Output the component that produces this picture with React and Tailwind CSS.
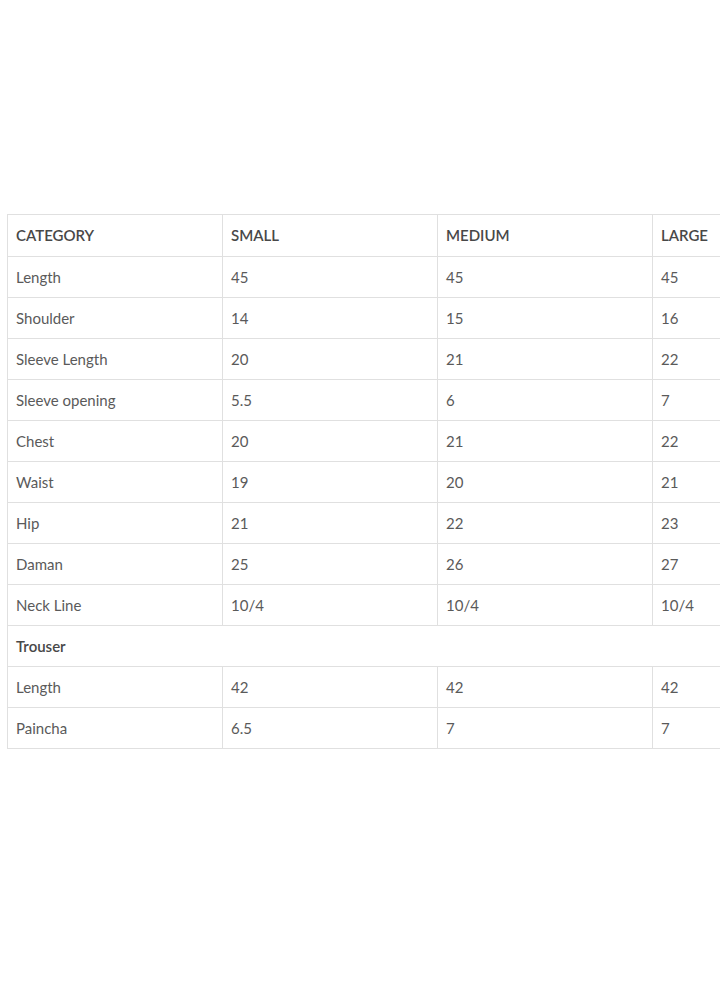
const rows = [
  ["Length", "45", "45", "45"],
  ["Shoulder", "14", "15", "16"],
  ["Sleeve Length", "20", "21", "22"],
  ["Sleeve opening", "5.5", "6", "7"],
  ["Chest", "20", "21", "22"],
  ["Waist", "19", "20", "21"],
  ["Hip", "21", "22", "23"],
  ["Daman", "25", "26", "27"],
  ["Neck Line", "10/4", "10/4", "10/4"],
];

const trouser = [
  ["Length", "42", "42", "42"],
  ["Paincha", "6.5", "7", "7"],
];

function Row({ cells }) {
  return (
    <tr className="h-[41px]">
      {cells.map((c, i) => (
        <td key={i} className="border border-[#e0e0e0] px-2 align-middle">
          {c}
        </td>
      ))}
    </tr>
  );
}

export default function App() {
  return (
    <div className="w-[720px] h-[1002px] overflow-hidden bg-white" style={{ fontFamily: "Lato, 'Open Sans', sans-serif" }}>
      <div className="pt-[214px] pl-[7px]">
        <table className="table-fixed border-collapse w-[861px] text-[15px] text-[#5a5a5a]">
          <colgroup>
            <col className="w-[215px]" />
            <col className="w-[215px]" />
            <col className="w-[215px]" />
            <col className="w-[215px]" />
          </colgroup>
          <thead>
            <tr className="h-[42px] text-left uppercase font-semibold text-[#484848]">
              <th className="border border-[#e0e0e0] px-2 font-semibold">Category</th>
              <th className="border border-[#e0e0e0] px-2 font-semibold">Small</th>
              <th className="border border-[#e0e0e0] px-2 font-semibold">Medium</th>
              <th className="border border-[#e0e0e0] px-2 font-semibold">Large</th>
            </tr>
          </thead>
          <tbody>
            {rows.map((r) => (
              <Row key={r[0]} cells={r} />
            ))}
            <tr className="h-[41px]">
              <td colSpan={4} className="border border-[#e0e0e0] px-2 font-semibold text-[#484848]">
                Trouser
              </td>
            </tr>
            {trouser.map((r) => (
              <Row key={r[0]} cells={r} />
            ))}
          </tbody>
        </table>
      </div>
    </div>
  );
}
